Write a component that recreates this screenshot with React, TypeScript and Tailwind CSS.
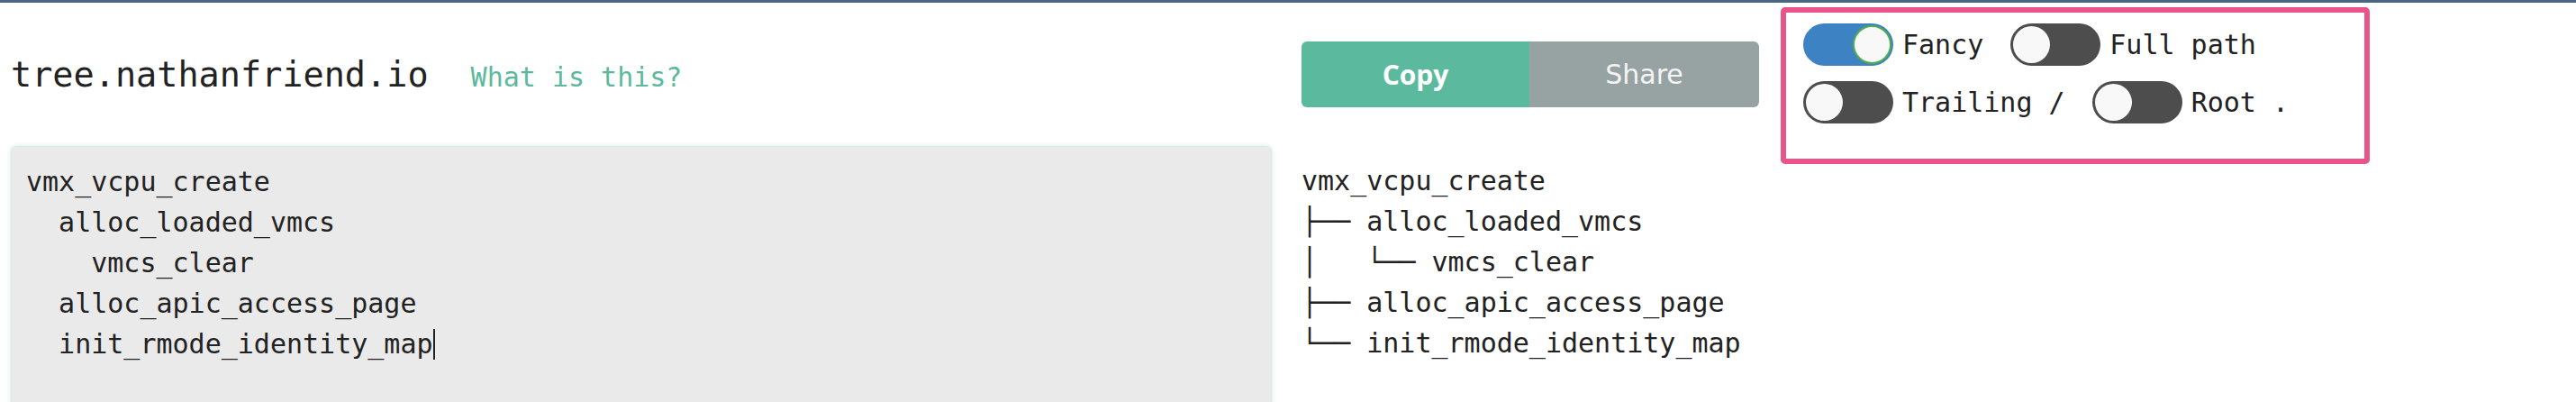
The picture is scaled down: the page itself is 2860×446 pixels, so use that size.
import React from 'react';

const MONO = "font-['DejaVu_Sans_Mono',monospace]";

const source = [
  'vmx_vcpu_create',
  '  alloc_loaded_vmcs',
  '    vmcs_clear',
  '  alloc_apic_access_page',
  '  init_rmode_identity_map',
];

const tree = [
  'vmx_vcpu_create',
  '├── alloc_loaded_vmcs',
  '│   └── vmcs_clear',
  '├── alloc_apic_access_page',
  '└── init_rmode_identity_map',
];

function Toggle({ on, label }: { on: boolean; label: string }) {
  return (
    <div className="flex items-center">
      <div
        className={
          on
            ? 'flex h-[47px] w-[100px] items-center justify-end rounded-full bg-[#3d82c2] p-[2px]'
            : 'flex h-[47px] w-[100px] items-center rounded-full bg-[#4d4d4d] p-[3px]'
        }
      >
        {on ? (
          <div className="h-[43px] w-[43px] rounded-full border-2 border-[#52ad4f] bg-[#f8f8f8]" />
        ) : (
          <div className="h-[41px] w-[41px] rounded-full bg-[#f8f8f8]" />
        )}
      </div>
      <span className="ml-[10px] whitespace-pre text-[30px] text-[#222]">{label}</span>
    </div>
  );
}

export default function App() {
  return (
    <div className={`h-[446px] w-[2860px] overflow-hidden bg-white ${MONO}`}>
      <div className="h-[3px] bg-[#4b6584]" />

      <div className="flex pl-[12px]">
        {/* left: title + input */}
        <div className="flex w-[1400px] flex-col">
          <div className="flex h-[159px] items-center">
            <div className="flex items-baseline">
              <h1 className="text-[38.5px] text-[#222]">tree.nathanfriend.io</h1>
              <a className="ml-[47px] text-[30px] text-[#5cb99d]">What is this?</a>
            </div>
          </div>
          <div className="h-[330px] rounded-[6px] border border-[#dcede6] bg-[#eaeaea] p-[16px] shadow-[0_0_5px_rgba(92,185,157,0.3)]">
            <div className="whitespace-pre text-[30px] leading-[45px] text-[#222]">
              {source.map((line, i) => (
                <div key={i}>
                  {line}
                  {i === source.length - 1 && (
                    <span className="inline-block h-[34px] w-[2px] bg-[#222] align-[-7px]" />
                  )}
                </div>
              ))}
            </div>
          </div>
        </div>

        {/* right: actions + output */}
        <div className="ml-[33px] flex flex-1 flex-col">
          <div className="flex h-[159px] items-center">
            <div className="flex h-[73px] overflow-hidden rounded-[6px] text-[30px]">
              <button className="w-[253px] bg-[#5bba9d] font-['Open_Sans',sans-serif] font-bold text-white">
                Copy
              </button>
              <button className="w-[255px] bg-[#97a3a3] font-['DejaVu_Sans',sans-serif] text-[#f4f4f4]">
                Share
              </button>
            </div>
            <div className="ml-[24px] mt-[5px] h-[174px] w-[654px] self-start rounded-[5px] border-[6px] border-[#e9558a] px-[19px] pt-[12px]">
              <div className="flex flex-wrap gap-x-[30px] gap-y-[17px]">
                <Toggle on label="Fancy" />
                <Toggle on={false} label="Full path" />
                <Toggle on={false} label="Trailing /" />
                <Toggle on={false} label="Root ." />
              </div>
            </div>
          </div>
          <div className="whitespace-pre pt-[16px] text-[30px] leading-[45px] text-[#222]">
            {tree.map((line, i) => (
              <div key={i}>{line}</div>
            ))}
          </div>
        </div>
      </div>
    </div>
  );
}
